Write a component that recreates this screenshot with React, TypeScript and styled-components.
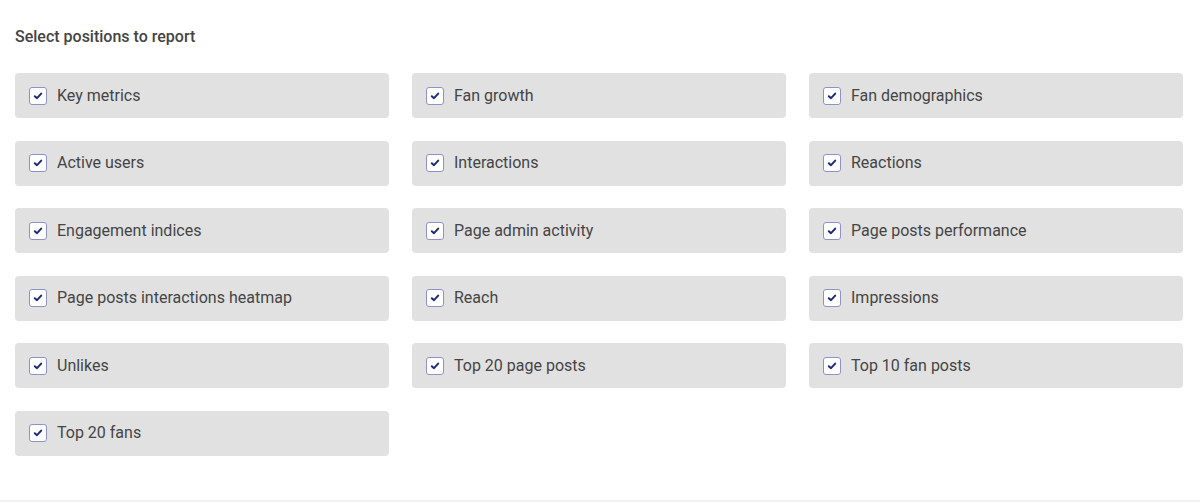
import React from "react";
import styled, { createGlobalStyle } from "styled-components";

const Global = createGlobalStyle`
  html, body { margin: 0; padding: 0; background: #fff; }
  body { font-family: Roboto, "Liberation Sans", Arial, sans-serif; }
`;

const Page = styled.div`
  box-sizing: border-box;
  width: 1200px;
  height: 502px;
  padding: 27px 17px 0 15px;
  border-bottom: 2px solid #f1f1f1;
`;

const Heading = styled.h2`
  margin: 0 0 27px 0;
  font-size: 16px;
  line-height: 19px;
  font-weight: 500;
  color: #444;
`;

const Grid = styled.div`
  display: grid;
  grid-template-columns: repeat(3, 374px);
  column-gap: 23px;
  row-gap: 22.6px;
`;

const Card = styled.label`
  display: flex;
  align-items: center;
  height: 45px;
  box-sizing: border-box;
  padding-left: 14px;
  background: #e1e1e1;
  border-radius: 4px;
  cursor: pointer;
`;

const Box = styled.span`
  box-sizing: border-box;
  width: 18px;
  height: 18px;
  border: 1px solid #8e92c6;
  border-radius: 3px;
  background: #fff;
  display: flex;
  align-items: center;
  justify-content: center;
  margin-right: 10px;
  flex: none;
`;

const Label = styled.span`
  font-size: 16px;
  color: #454545;
  line-height: 20px;
`;

const items = [
  "Key metrics",
  "Fan growth",
  "Fan demographics",
  "Active users",
  "Interactions",
  "Reactions",
  "Engagement indices",
  "Page admin activity",
  "Page posts performance",
  "Page posts interactions heatmap",
  "Reach",
  "Impressions",
  "Unlikes",
  "Top 20 page posts",
  "Top 10 fan posts",
  "Top 20 fans",
];

const Check = () => (
  <svg width="10" height="8" viewBox="0 0 10 8">
    <path d="M1.8 4.2 L4 6.2 L8.2 1.6" fill="none" stroke="#1d2a78" strokeWidth="2" strokeLinecap="round" strokeLinejoin="round" />
  </svg>
);

export default function App() {
  return (
    <>
      <Global />
      <Page>
        <Heading>Select positions to report</Heading>
        <Grid>
          {items.map((t) => (
            <Card key={t}>
              <Box>
                <Check />
              </Box>
              <Label>{t}</Label>
            </Card>
          ))}
        </Grid>
      </Page>
    </>
  );
}
